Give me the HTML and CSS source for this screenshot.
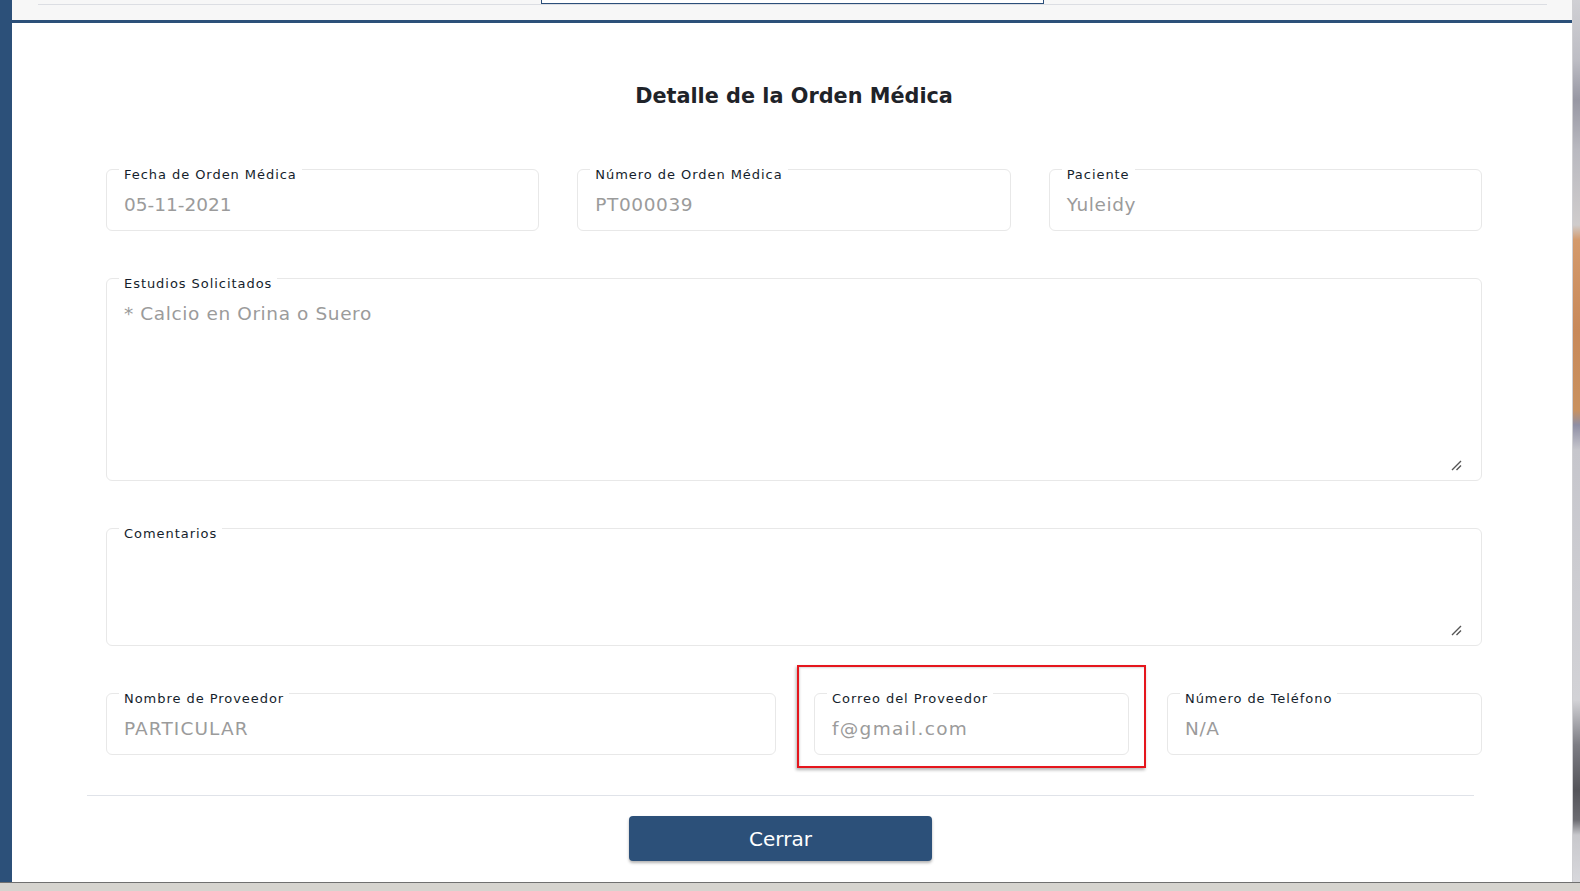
FILE: index.html
```html
<!DOCTYPE html>
<html lang="es">
<head>
<meta charset="utf-8">
<title>Detalle de la Orden Médica</title>
<link rel="stylesheet" href="styles.css">
</head>
<body>
<div class="screen">
  <div class="main">
    <div class="leftbar"></div>
    <div class="panel">
      <div class="topbar">
        <div class="topline"></div>
        <div class="tab"></div>
      </div>
      <div class="bluebar"></div>
      <div class="body">
        <h1 class="title">Detalle de la Orden Médica</h1>
        <div class="form">
          <div class="row row-3">
            <div class="field">
              <span class="label">Fecha de Orden Médica</span>
              <span class="value num">05-11-2021</span>
            </div>
            <div class="field">
              <span class="label">Número de Orden Médica</span>
              <span class="value">PT000039</span>
            </div>
            <div class="field">
              <span class="label">Paciente</span>
              <span class="value">Yuleidy</span>
            </div>
          </div>
          <div class="field area area-lg">
            <span class="label">Estudios Solicitados</span>
            <span class="value">* Calcio en Orina o Suero</span>
            <svg class="grip" width="11" height="11" viewBox="0 0 11 11"><path d="M1 10 L10 1 M5.5 10 L10 5.5" stroke="#555" stroke-width="1.4" fill="none"/></svg>
          </div>
          <div class="field area area-sm">
            <span class="label">Comentarios</span>
            <span class="value"></span>
            <svg class="grip" width="11" height="11" viewBox="0 0 11 11"><path d="M1 10 L10 1 M5.5 10 L10 5.5" stroke="#555" stroke-width="1.4" fill="none"/></svg>
          </div>
          <div class="row row-4">
            <div class="field">
              <span class="label">Nombre de Proveedor</span>
              <span class="value caps">PARTICULAR</span>
            </div>
            <div class="field marked">
              <span class="label">Correo del Proveedor</span>
              <span class="value wide">f@gmail.com</span>
              <div class="highlight"></div>
            </div>
            <div class="field">
              <span class="label">Número de Teléfono</span>
              <span class="value">N/A</span>
            </div>
          </div>
        </div>
        <div class="footer">
          <button class="btn">Cerrar</button>
        </div>
      </div>
    </div>
    <div class="bgstrip"></div>
  </div>
  <div class="taskbar"></div>
</div>
</body>
</html>
```
FILE: styles.css
```css
html, body {
  margin: 0;
  padding: 0;
}
body {
  width: 1580px;
  height: 891px;
  overflow: hidden;
  font-family: "DejaVu Sans", "Liberation Sans", sans-serif;
  background: #fff;
}
.screen {
  display: flex;
  flex-direction: column;
  width: 1580px;
  height: 891px;
}
.main {
  display: flex;
  height: 882px;
}
.leftbar {
  width: 12px;
  background: #2c5079;
}
.panel {
  width: 1561px;
  display: flex;
  flex-direction: column;
  background: #fff;
}
.bgstrip {
  width: 7px;
  border-left: 1px solid #cfcfd2;
  background: linear-gradient(to bottom,
    #d0d0d4 0px, #bdbdc4 60px, #9797a3 100px, #b9b9c0 150px, #cfcccc 225px,
    #d49a6c 240px, #c8895a 330px, #c9915f 410px, #8f8fa5 425px, #c6c6cc 450px,
    #d2d2d6 700px, #7d7d84 745px, #54545a 790px, #6c6c72 820px, #c8c8cc 835px, #d8d8dc 882px);
}
.taskbar {
  height: 8px;
  border-top: 1px solid #707070;
  background: #d6d4cf;
}
.topbar {
  position: relative;
  height: 20px;
  background: #f7f7f7;
  padding-top: 4px;
  box-sizing: border-box;
}
.topline {
  margin-left: 26px;
  width: 1509px;
  height: 1px;
  background: #dcdee3;
}
.tab {
  position: absolute;
  top: 0;
  left: 529px;
  width: 501px;
  height: 3px;
  background: #fff;
  border: 1px solid #2c4f7a;
  border-top: none;
}
.bluebar {
  height: 3px;
  background: #2c5079;
}
.body {
  display: flex;
  flex-direction: column;
  padding-top: 58px;
}
.title {
  margin: 0;
  text-align: center;
  font-size: 20.8px;
  line-height: 30px;
  font-weight: bold;
  color: #1f2329;
  padding-left: 4px;
}
.form {
  margin-top: 58px;
  margin-left: 94px;
  width: 1376px;
  display: flex;
  flex-direction: column;
  gap: 47px;
}
.row {
  display: grid;
  column-gap: 38px;
}
.row-3 {
  grid-template-columns: 1fr 1fr 1fr;
}
.row-4 {
  grid-template-columns: 670fr 315fr 315fr;
}
.field {
  position: relative;
  box-sizing: border-box;
  height: 62px;
  border: 1px solid #e8e8e8;
  border-radius: 6px;
  padding: 0 12px;
  display: flex;
  flex-direction: column;
  align-items: flex-start;
}
.label {
  margin-top: -3px;
  padding: 0 5px;
  background: #fff;
  font-size: 13px;
  line-height: 16px;
  letter-spacing: 0.95px;
  color: #151e2c;
  white-space: nowrap;
}
.value {
  margin-top: 10px;
  padding-left: 5px;
  font-size: 18.5px;
  line-height: 24px;
  letter-spacing: 0.6px;
  color: #9b9b9b;
  white-space: nowrap;
}
.value.num {
  letter-spacing: 0;
}
.value.caps {
  letter-spacing: 1.1px;
}
.value.wide {
  letter-spacing: 1.3px;
}
.area-lg {
  height: 203px;
}
.area-sm {
  height: 118px;
}
.grip {
  margin-top: auto;
  margin-bottom: 9px;
  margin-right: 7px;
  align-self: flex-end;
}
.highlight {
  position: absolute;
  left: -18px;
  top: -29px;
  right: -18px;
  bottom: -14px;
  border: 2px solid #e5161d;
  box-shadow: -1px 2px 3px rgba(0, 0, 0, 0.3), inset 1px 1px 2px rgba(0,0,0,0.15);
  pointer-events: none;
}
.footer {
  margin-top: 40px;
  margin-left: 75px;
  width: 1387px;
  border-top: 1px solid #e0e3e9;
  display: flex;
  justify-content: center;
  padding-top: 20px;
}
.btn {
  width: 303px;
  height: 45px;
  border: none;
  border-radius: 4px;
  background: #2c5079;
  color: #fff;
  font-family: "DejaVu Sans", "Liberation Sans", sans-serif;
  font-size: 20px;
  box-shadow: 0 2px 3px rgba(0, 0, 0, 0.3);
  padding: 0;
}
```
